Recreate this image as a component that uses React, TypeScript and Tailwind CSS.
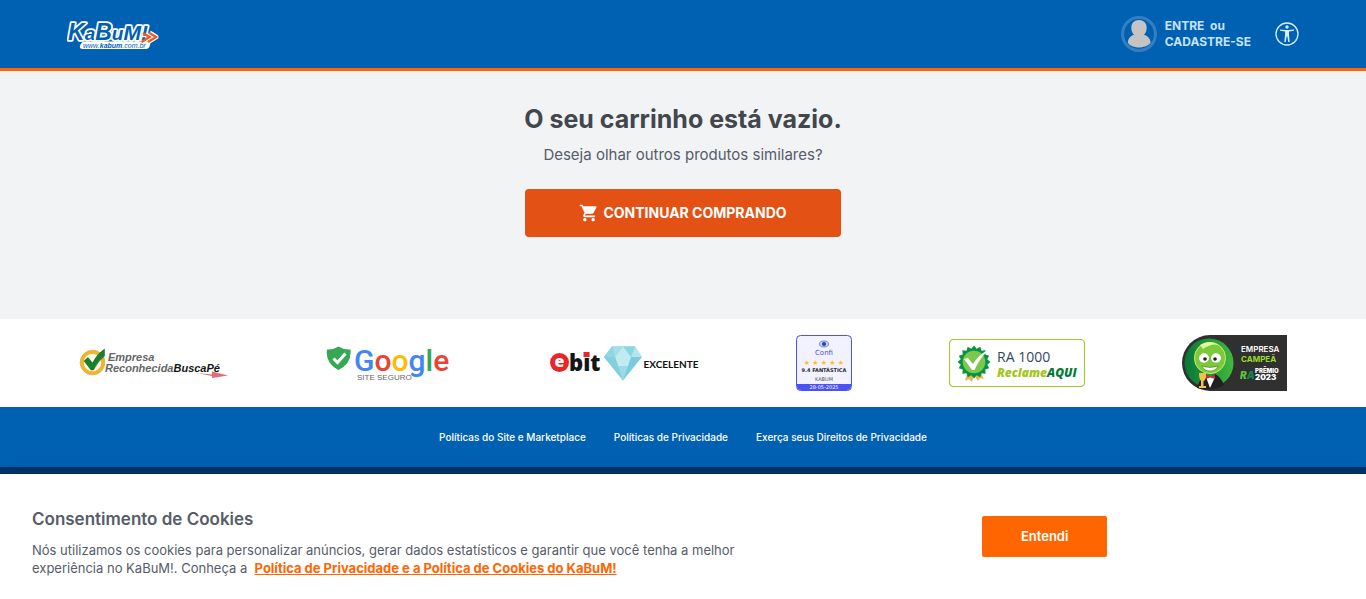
import React from "react";

function KabumLogo() {
  return (
    <svg width="92" height="34" viewBox="0 0 92 34" role="img" aria-label="KaBuM!">
      <path d="M17 24.500H81Q84 25 83 28 82 32 79 32H16Q12 32 13 29 14 25 17 24.500Z" fill="#fff" />
      <path d="M76 16 82.500 20 74.500 25M82.500 16 89 20 81 25" fill="none" stroke="#fff" strokeWidth="5" strokeLinejoin="round" />
      <text x="1" y="22.500" fontSize="23" fontFamily="'Liberation Sans', sans-serif" fontWeight="700" fontStyle="italic" fill="#0060b1" stroke="#fff" strokeWidth="3.500" strokeLinejoin="round" paintOrder="stroke">
        K<tspan fontSize="19">a</tspan>B<tspan fontSize="19">u</tspan><tspan fontSize="21">M!</tspan>
      </text>
      <path d="M76 16 82.500 20 74.500 25M82.500 16 89 20 81 25" fill="none" stroke="#f15a22" strokeWidth="2.400" />
      <text x="16" y="30.500" fontSize="7" fontStyle="italic" fontFamily="'Liberation Sans', sans-serif" fill="#0060b1">
        www.<tspan fontWeight="700">kabum</tspan>.com.br
      </text>
    </svg>
  );
}

function AvatarIcon() {
  return (
    <svg width="36" height="36" viewBox="0 0 36 36" aria-hidden="true">
      <circle cx="18" cy="18" r="16.500" fill="none" stroke="#337fc1" strokeWidth="3" />
      <path d="M18 4C22.500 4 25.700 7 25.700 11.500 25.700 15 24.500 17.500 23 18.700 27 20 30 23.500 29.500 27 27 30 22 31.500 18 31.500S9 30 7 27C6.500 23.500 9 20 13 18.700 11.500 17.500 10.300 15 10.300 11.500 10.300 7 13.500 4 18 4Z" fill="#c4c4c4" />
    </svg>
  );
}

function AccessibilityIcon() {
  return (
    <svg width="24" height="24" viewBox="0 0 24 24" aria-hidden="true">
      <circle cx="12" cy="12" r="11" fill="none" stroke="#d8ecfb" strokeWidth="1.300" />
      <circle cx="12" cy="5" r="1.700" fill="#d8ecfb" />
      <path d="M5 7.400 10.500 7.900H13.500L19 7.400V8.700L14 9.500V13L14.700 20H13.200L12.400 14.500H11.600L10.800 20H9.300L10 13V9.500L5 8.700Z" fill="#d8ecfb" />
    </svg>
  );
}

function CartIcon() {
  return (
    <svg width="20" height="20" viewBox="0 0 24 24" fill="currentColor" aria-hidden="true">
      <path d="M7 18c-1.100 0-1.990.9-1.990 2S5.900 22 7 22s2-.9 2-2-.9-2-2-2zM1 2v2h2l3.600 7.590-1.350 2.450c-.16.280-.25.610-.25.960 0 1.100.9 2 2 2h12v-2H7.420c-.14 0-.25-.110-.25-.250l.03-.120.900-1.630h7.450c.75 0 1.410-.410 1.750-1.030l3.580-6.490A1.003 1.003 0 0020 4H5.210l-.94-2H1zm16 16c-1.100 0-1.990.9-1.990 2s.89 2 1.990 2 2-.9 2-2-.9-2-2-2z" />
    </svg>
  );
}

function BuscapeSeal() {
  return (
    <svg width="150" height="56" viewBox="0 0 150 56" role="img" aria-label="Empresa Reconhecida BuscaPé">
      <circle cx="13.500" cy="27.500" r="10.500" fill="#fff9e8" stroke="#efb52d" strokeWidth="3.500" />
      <circle cx="13.500" cy="27.500" r="12.400" fill="none" stroke="#d99a2a" strokeWidth=".6" />
      <path d="M5 26 9 22.500 13.500 28Q18 19 25.500 14V21Q19 26 14.500 35H12Z" fill="#16822e" stroke="#0b5e20" strokeWidth=".5" />
      <path d="M118 38 133 39.500V36.500L149 40.500 133 43V41Z" fill="#e26c70" />
      <g fontFamily="'Liberation Sans', sans-serif" fontWeight="700" fontStyle="italic" fontSize="11">
        <text x="29" y="26" fill="#666">Empresa</text>
        <text x="26" y="37" fill="#666">Reconhecida<tspan fill="#151515">BuscaPé</tspan></text>
      </g>
    </svg>
  );
}

function GoogleSeal() {
  return (
    <svg width="126" height="56" viewBox="0 0 126 56" role="img" aria-label="Google Site Seguro">
      <path d="M12.500 11.500Q18 15 24.500 14.500 26 28 12.500 35-1 28 1 14.500 7 15 12.500 11.500Z" fill="#34a853" />
      <path d="M7.500 23.500 11.500 27.500 19.500 18.500" fill="none" stroke="#fff" strokeWidth="3" />
      <text x="28" y="36" fontSize="30" fontWeight="500" fontFamily="Roboto, sans-serif" fill="#4285f4">
        G<tspan fill="#ea4335">o</tspan><tspan fill="#fbbc05">o</tspan>g<tspan fill="#34a853">l</tspan><tspan fill="#ea4335">e</tspan>
      </text>
      <text x="31" y="45" fontSize="8" fontWeight="500" fontFamily="'Liberation Sans', sans-serif" fill="#666">SITE SEGURO</text>
    </svg>
  );
}

function EbitSeal() {
  return (
    <svg width="151" height="56" viewBox="0 0 151 56" role="img" aria-label="Ebit Excelente">
      <circle cx="10.500" cy="27.500" r="9.500" fill="#e9242a" />
      <text x="5.500" y="32" fontSize="16" fontWeight="800" fontFamily="'Open Sans', sans-serif" fill="#fff">e</text>
      <text x="20" y="36" fontSize="22" fontWeight="800" fontFamily="'Open Sans', sans-serif" fill="#151515">bit</text>
      <rect x="34.500" y="17" width="6" height="5" fill="#e9242a" />
      <path d="M63 11.500H86L93 22 74 45.500 55 22Z" fill="#7accdc" />
      <path d="M63 11.500 66 22 74 11.500Z" fill="#a4dfe9" />
      <path d="M74 11.500 82 22 86 11.500Z" fill="#8ed5e2" />
      <path d="M66 22 74 11.500 82 22 79 31H69Z" fill="#bfebf1" />
      <path d="M63 11.500 55 22H66Z" fill="#8fd6e2" />
      <path d="M86 11.500 93 22H82Z" fill="#b3e6ed" />
      <path d="M55 22H66L69 31 74 45.500Z" fill="#84cfde" />
      <path d="M69 31H79L74 45.500Z" fill="#9bdce6" />
      <text x="94.500" y="33" fontSize="10" fontWeight="700" fontFamily="Lato, sans-serif" fill="#111">EXCELENTE</text>
    </svg>
  );
}

function ConfiSeal() {
  return (
    <svg width="56" height="56" viewBox="0 0 56 56" role="img" aria-label="Confi 9.4 Fantástica">
      <rect x=".5" y=".5" width="55" height="55" rx="4" fill="#f2f2ff" stroke="#4a51f5" />
      <path d="M1 49H55V51Q55 55 51 55H5Q1 55 1 51Z" fill="#4a51f5" />
      <ellipse cx="28" cy="9" rx="4.500" ry="3" fill="#c5d3fa" stroke="#718ce9" />
      <circle cx="28" cy="9" r="2" fill="#3138b9" />
      <g fontFamily="'DejaVu Sans', sans-serif" textAnchor="middle">
        <text x="28" y="20" fontSize="7" fill="#4a51e5">Confi</text>
        <text x="28" y="30" fontSize="7" fill="#ffc107">★ ★ ★ ★ ★</text>
        <text x="28" y="37" fontSize="5" fontWeight="700" fill="#252532">9.4 FANTÁSTICA</text>
        <text x="28" y="45.500" fontSize="5" fill="#555">KABUM</text>
        <text x="28" y="54" fontSize="5" fill="#fff">28-05-2025</text>
      </g>
    </svg>
  );
}

const badgeTeeth = Array.from({ length: 32 }, (_, i) => {
  const radius = i % 2 ? 13.5 : 16.5;
  const angle = (i * Math.PI) / 16;
  return `${25 + radius * Math.cos(angle)},${23 + radius * Math.sin(angle)}`;
}).join(" ");

function ReclameAquiSeal() {
  return (
    <svg width="136" height="48" viewBox="0 0 136 48" role="img" aria-label="RA 1000 ReclameAQUI">
      <rect x=".5" y=".5" width="135" height="47" rx="4" fill="#fff" stroke="#a5c935" strokeWidth="1.200" />
      <path d="M19 32 16 42 20 40 23 43 25 36 29 42 31 39 35 40 31 32Z" fill="#e6b84e" />
      <polygon points={badgeTeeth} fill="#079344" />
      <circle cx="25" cy="23" r="11.300" fill="#7bc84c" />
      <path d="M15 20 19 19 24 25Q30 15 42 9 31 18 25.500 31H23Z" fill="#fff" />
      <g fontFamily="'Open Sans', sans-serif">
        <text x="48" y="23" fontSize="14" fill="#34495e">RA 1000</text>
        <text x="48" y="38" fontSize="12" fontStyle="italic" fontWeight="800" fill="#a4c51c">
          Reclame<tspan fill="#087a35">AQUI</tspan>
        </text>
      </g>
    </svg>
  );
}

function ChampionSeal() {
  return (
    <svg width="105" height="56" viewBox="0 0 105 56" role="img" aria-label="Empresa Campeã Prêmio 2023">
      <defs>
        <linearGradient id="champion-green">
          <stop stopColor="#087638" />
          <stop offset="1" stopColor="#42b83d" />
        </linearGradient>
      </defs>
      <path d="M28 0H105V56H28A28 28 0 0 1 28 0Z" fill="#303030" />
      <circle cx="27" cy="28" r="24.500" fill="url(#champion-green)" />
      <circle cx="28" cy="23" r="16" fill="#7cc93a" />
      <circle cx="28" cy="23" r="15.500" fill="none" stroke="#b9e878" />
      <path d="M18 10Q27 4 37 10 29 8 21 14Z" fill="#dcfb9d" />
      <ellipse cx="22" cy="23" rx="5" ry="4.700" fill="#fff" />
      <ellipse cx="34" cy="23" rx="5" ry="4.700" fill="#fff" />
      <circle cx="23" cy="24" r="1.800" fill="#222" />
      <circle cx="33" cy="24" r="1.800" fill="#222" />
      <path d="M20 31Q28 34 36 31 34 36 28 36 22 36 20 31Z" fill="#fff" stroke="#2d6b1f" strokeWidth=".5" />
      <path d="M15 53Q18 43 23 39L28 42 33 39Q39 42 42 50 32 57 15 53Z" fill="#202020" />
      <path d="M24 42 28 53 33 42Z" fill="#fff" />
      <path d="M24 39.500 28 41.500 33 39.500V44L28 42.500 24 44Z" fill="#c63235" />
      <path d="M17 38H24V42Q23 46 21.500 46V51H24V53H17V51H19V46Q17 44 17 38Z" fill="#efc24e" />
      <g fontFamily="Inter, sans-serif" fontWeight="700">
        <text x="59" y="17" fontSize="8" fontWeight="600" fill="#fff">EMPRESA</text>
        <text x="59" y="26.500" fontSize="8" fill="#9ade20">CAMPEÃ</text>
        <text x="58" y="44" fontSize="10" fontWeight="900" fontStyle="italic" fill="#5fc339">R<tspan fill="#138846">A</tspan></text>
        <text x="73" y="38" fontSize="6" fontWeight="900" fill="#fff">PRÊMIO</text>
        <text x="73" y="45" fontSize="8" fontWeight="900" fill="#fff">2023</text>
      </g>
    </svg>
  );
}

export default function App() {
  return (
    <div className="flex min-h-screen flex-col bg-[#0060b1] font-[Inter,sans-serif]">
      <header className="border-b-3 border-[#ff6500] bg-[#0060b1]">
        <div className="mx-auto flex h-17 max-w-[1232px] items-center justify-between">
          <a href="#inicio"><KabumLogo /></a>
          <div className="flex items-center gap-6">
            <div className="flex items-center gap-2 text-xs leading-4 font-bold text-[#c5e3fa]">
              <AvatarIcon />
              <p>
                <a href="#entrar">ENTRE</a>&nbsp; ou<br />
                <a href="#cadastro">CADASTRE-SE</a>
              </p>
            </div>
            <button type="button" aria-label="Acessibilidade"><AccessibilityIcon /></button>
          </div>
        </div>
      </header>

      <main className="flex h-62 flex-col items-center bg-[#f1f3f5] pt-8 text-center">
        <h1 className="text-[25px] leading-8 font-bold text-[#42464d]">O seu carrinho está vazio.</h1>
        <p className="mt-2 text-[15px] leading-6 text-[#565c69]">Deseja olhar outros produtos similares?</p>
        <a href="#produtos" className="mt-[22px] flex h-12 w-[316px] items-center justify-center gap-1 rounded bg-[#e35115] text-sm font-bold text-white">
          <CartIcon />
          CONTINUAR COMPRANDO
        </a>
      </main>

      <section aria-label="Selos" className="bg-white">
        <div className="mx-auto flex h-22 max-w-[1208px] items-center justify-between">
          <BuscapeSeal />
          <GoogleSeal />
          <EbitSeal />
          <ConfiSeal />
          <ReclameAquiSeal />
          <ChampionSeal />
        </div>
      </section>

      <footer className="flex-1">
        <nav className="flex h-15 items-center justify-center gap-7 text-[10px] font-medium text-white">
          <a href="#politicas">Políticas do Site e Marketplace</a>
          <a href="#privacidade">Políticas de Privacidade</a>
          <a href="#direitos">Exerça seus Direitos de Privacidade</a>
        </nav>
        <div className="h-[7px] bg-[#003567]" />
      </footer>

      <section aria-label="Cookies" className="sticky bottom-0 grid grid-cols-[5fr_4fr] items-center bg-white px-8 shadow-[0_0_16px_rgba(0,0,0,0.18)]">
        <div className="pt-[33px] pb-[22px] text-[#565c69]">
          <h2 className="text-[17px] leading-6 font-semibold">Consentimento de Cookies</h2>
          <p className="mt-[10px] text-[13px] leading-[18px]">
            Nós utilizamos os cookies para personalizar anúncios, gerar dados estatísticos e garantir que você tenha a melhor<br />
            experiência no KaBuM!. Conheça a&nbsp;{" "}
            <a href="#cookies" className="font-bold text-[#ff6500] underline">Política de Privacidade e a Política de Cookies do KaBuM!</a>
          </p>
        </div>
        <button type="button" className="h-[41px] w-[125px] justify-self-center rounded-xs bg-[#ff6500] text-[13px] font-semibold text-white">Entendi</button>
      </section>
    </div>
  );
}
